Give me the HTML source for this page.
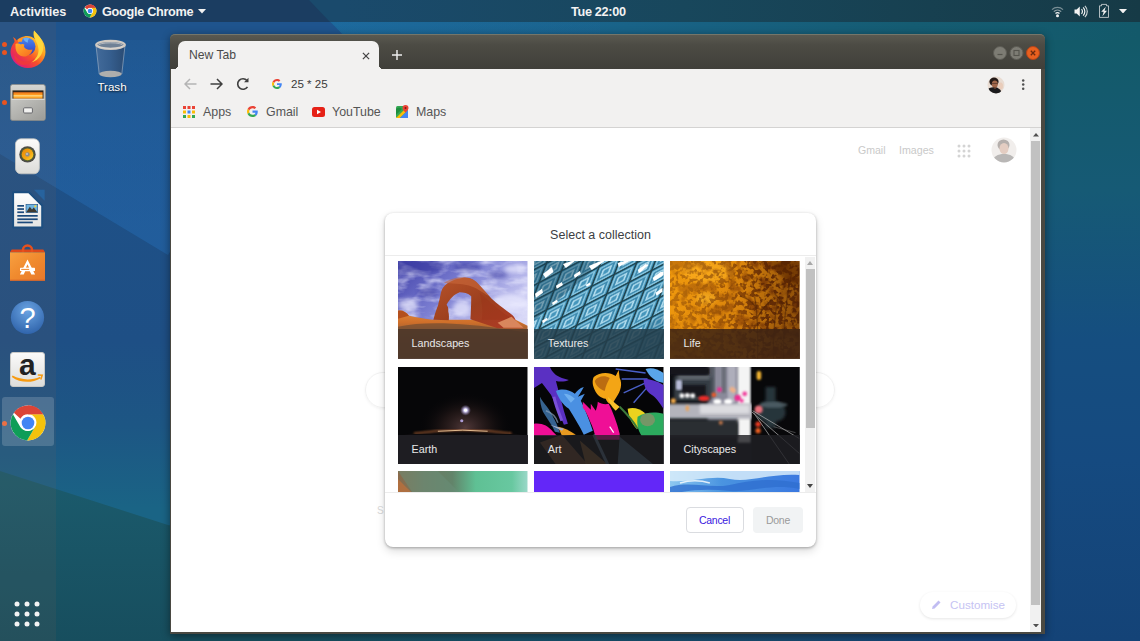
<!DOCTYPE html>
<html><head><meta charset="utf-8"><title>New Tab</title>
<style>
*{box-sizing:border-box;margin:0;padding:0}
html,body{width:1140px;height:641px;overflow:hidden}
body{font-family:"Liberation Sans",sans-serif;position:relative;background:#1e5084}
.abs{position:absolute}
#wall{left:0;top:0;width:1140px;height:641px}
#topbar{left:0;top:0;width:1140px;height:22px;color:#f2f2f2;font-weight:bold;font-size:12.700px;line-height:24px;white-space:nowrap}
#dock{left:0;top:22px;width:56px;height:619px;background:rgba(130,95,85,.12)}
.dot{width:5px;height:5px;border-radius:50%;background:#e95420;left:2px}
#win{left:170px;top:34px;width:874.500px;height:600px;background:#4a4942;border-radius:5px 5px 0 0;box-shadow:0 2px 9px rgba(0,0,0,.45)}
#titlebar{left:0;top:0;width:874.500px;height:35px;background:linear-gradient(#5a5950 0%,#4c4b44 30%,#403f3a 100%);border-radius:5px 5px 0 0;border-top:1px solid #74766a}
#tab{left:8px;top:6px;width:201px;height:29px;background:#f2f1f0;border-radius:7px 7px 0 0;font-size:12.150px;color:#4a4a4a;line-height:29px;padding-left:11px}
#toolbar{left:1px;top:35px;width:870px;height:30px;background:#f2f1f0}
#bmbar{left:1px;top:65px;width:870px;height:29px;background:#f2f1f0;border-bottom:1px solid #d4d3d2;font-size:12.400px;color:#555;line-height:27px}
#content{left:1px;top:94px;width:870px;height:503.500px;background:#fff;overflow:hidden}
#dialog{left:215px;top:179px;width:431px;height:334px;background:#fff;border-radius:8px;box-shadow:0 1px 3px rgba(0,0,0,.3),0 4px 10px rgba(0,0,0,.14)}
.tile{width:129.5px;height:97.5px;overflow:hidden}
.tile .lbl{position:absolute;left:0;bottom:0;width:100%;height:29.5px;background:rgba(32,33,36,.72);color:#e8e8e8;font-size:10.750px;line-height:29px;padding-left:13.5px}
</style></head><body>
<svg width="0" height="0" style="position:absolute"><defs>
<symbol id="chrome" viewBox="0 0 48 48">
 <circle cx="24" cy="24" r="22" fill="#fff"/>
 <path d="M24 2a22 22 0 0 1 19.05 11H24a11 11 0 0 0-9.53 5.5L6.2 11.1A22 22 0 0 1 24 2z" fill="#db4437"/>
 <path d="M43.05 13A22 22 0 0 1 22.9 45.97L32.6 29.5A11 11 0 0 0 33.5 18.5 11 11 0 0 0 24 13z" fill="#f4c20d"/>
 <path d="M4.95 13A22 22 0 0 0 22.9 45.97l9.63-16.47A11 11 0 0 1 14.47 29.5z" fill="#0f9d58"/>
 <path d="M24 2a22 22 0 0 1 19.05 11H24z" fill="#db4437"/>
 <circle cx="24" cy="24" r="10" fill="#fff"/>
 <circle cx="24" cy="24" r="8" fill="#4285f4"/>
</symbol>
<symbol id="gicon" viewBox="0 0 48 48">
 <path fill="#EA4335" d="M24 9.5c3.54 0 6.71 1.22 9.21 3.6l6.85-6.85C35.9 2.38 30.47 0 24 0 14.62 0 6.51 5.38 2.56 13.22l7.98 6.19C12.43 13.72 17.74 9.5 24 9.5z"/>
 <path fill="#4285F4" d="M46.98 24.55c0-1.57-.15-3.09-.38-4.55H24v9.02h12.94c-.58 2.96-2.26 5.48-4.78 7.18l7.73 6c4.51-4.18 7.09-10.36 7.09-17.65z"/>
 <path fill="#FBBC05" d="M10.53 28.59c-.48-1.45-.76-2.99-.76-4.59s.27-3.14.76-4.59l-7.98-6.19C.92 16.46 0 20.12 0 24c0 3.88.92 7.54 2.56 10.78l7.97-6.19z"/>
 <path fill="#34A853" d="M24 48c6.48 0 11.93-2.13 15.89-5.81l-7.73-6c-2.15 1.45-4.92 2.3-8.16 2.3-6.26 0-11.57-4.22-13.47-9.91l-7.98 6.19C6.51 42.62 14.62 48 24 48z"/>
</symbol>
</defs></svg>
<svg id="wall" class="abs" width="1140" height="641" viewBox="0 0 1140 641">
 <defs>
  <linearGradient id="wl" x1="0" y1="0" x2="0" y2="1">
   <stop offset="0" stop-color="#1f5289"/><stop offset=".5" stop-color="#1e4f85"/><stop offset=".64" stop-color="#1d5684"/><stop offset=".78" stop-color="#1a6485"/><stop offset="1" stop-color="#1a6485"/>
  </linearGradient>
  <linearGradient id="wr" x1="0" y1="0" x2="0" y2="1">
   <stop offset="0" stop-color="#135a69"/><stop offset=".25" stop-color="#165a75"/><stop offset=".5" stop-color="#154e80"/><stop offset=".7" stop-color="#154a80"/><stop offset="1" stop-color="#144377"/>
  </linearGradient>
  <linearGradient id="wt" x1="0" y1="0" x2="1" y2="0">
   <stop offset="0" stop-color="#1c6a9c"/><stop offset=".28" stop-color="#1c6a9c"/><stop offset=".55" stop-color="#196388"/><stop offset=".8" stop-color="#155c72"/><stop offset="1" stop-color="#13596a"/>
  </linearGradient>
  <linearGradient id="wb" x1="0" y1="0" x2="0" y2="1">
   <stop offset="0" stop-color="#1b5b6d"/><stop offset="1" stop-color="#174e5e"/>
  </linearGradient>
 </defs>
 <rect width="1140" height="641" fill="url(#wt)"/>
 <rect x="0" y="40" width="600" height="601" fill="url(#wl)"/>
 <rect x="600" y="40" width="540" height="601" fill="url(#wr)"/>
 <linearGradient id="pgd" gradientUnits="userSpaceOnUse" x1="0" y1="22" x2="0" y2="230"><stop offset="0" stop-color="#2468ad" stop-opacity=".12"/><stop offset=".5" stop-color="#2468ad" stop-opacity=".4"/><stop offset="1" stop-color="#2468ad" stop-opacity=".5"/></linearGradient><polygon points="0,0 600,0 600,40 300,40 168,255 0,154" fill="url(#pgd)"/>
 <polygon points="0,471 168,525 600,600 600,641 0,641" fill="url(#wb)"/>
 <linearGradient id="wbs" x1="0" y1="0" x2="1" y2="0"><stop offset="0" stop-color="#174f5f"/><stop offset=".15" stop-color="#174f5f"/><stop offset=".4" stop-color="#165068"/><stop offset=".7" stop-color="#184a70"/><stop offset=".92" stop-color="#15437a"/><stop offset="1" stop-color="#15437a"/></linearGradient>
 <rect x="168" y="626" width="880" height="15" fill="url(#wbs)"/>
 <polygon points="0,0 309,0 348,40 0,40" fill="#1f5289"/>
 <polygon points="0,0 309,0 348,40 300,40 168,255 0,154" fill="#2468ad" opacity=".1"/>
 <linearGradient id="tbg" x1="0" y1="0" x2="1" y2="0"><stop offset="0" stop-color="#1a4a6c"/><stop offset=".3" stop-color="#1a4a6c"/><stop offset=".6" stop-color="#18475c"/><stop offset="1" stop-color="#163a46"/></linearGradient>
 <rect width="1140" height="22" fill="url(#tbg)"/>
 <polygon points="0,0 309,0 330,22 0,22" fill="#1b3d61"/>
</svg>
<div id="dock" class="abs">
 <div class="abs dot" style="top:20px"></div><div class="abs dot" style="top:28px"></div>
 <div class="abs dot" style="top:78px"></div>
 <div class="abs dot" style="top:399px"></div>
 <!-- firefox -->
 <svg class="abs" style="left:10px;top:8px" width="36" height="38" viewBox="0 0 36 38">
  <defs>
   <linearGradient id="ffo" x1=".85" y1=".1" x2=".15" y2=".9"><stop offset="0" stop-color="#ffd33a"/><stop offset=".3" stop-color="#ffa620"/><stop offset=".6" stop-color="#f6502a"/><stop offset=".85" stop-color="#e82a58"/><stop offset="1" stop-color="#d81f8a"/></linearGradient>
   <linearGradient id="ffb" x1="0" y1="0" x2="0" y2="1"><stop offset="0" stop-color="#4a8af0"/><stop offset=".55" stop-color="#3a5ed8"/><stop offset="1" stop-color="#3a3aa0"/></linearGradient>
   <linearGradient id="ffh" x1="0" y1="0" x2="1" y2="1"><stop offset="0" stop-color="#ffb02a"/><stop offset="1" stop-color="#f86a20"/></linearGradient>
  </defs>
  <path d="M3 7c1 2 1.500 3.500 1.500 5C2 15 .5 18.500.5 22a17.500 16 0 0 0 35 0c0-6-2-11-5.500-14.500C28 5 26 3 24 .5c-1 3-.5 6 1 8.500-3-2.500-7-3.500-11-2.500-3 .5-5.500 2-7.500 4C6 9 4.500 8 3 7z" fill="url(#ffo)"/>
  <circle cx="16.500" cy="16.500" r="9" fill="url(#ffb)"/>
  <path d="M13 8.500c2-1 4.500-1 6.500 0-1.500 1-2 2.500-1.500 4-2 0-3.500-1.500-5-4z" fill="#6ab0f8"/>
  <path d="M5.500 14c2-.8 4-.6 5.500.5 1.200-.6 2.500-.5 3.500.2-.8 1.200-.6 2.400.4 3.200 1.600 1.400 4 2.600 7.600 1.600-1 4.500-4.500 7-8.500 7-5 0-8.500-4.500-8.500-9.500z" fill="url(#ffh)"/><path d="M8 9.500c1.500-1 3.500-1.500 5-1l-1.500 3.500c-1.200-.2-2.500-.2-3.500 0z" fill="#ff9a22"/>
  <path d="M24 .5c2.500 3 5 5 7 8.500 3 5 3 11 0 16-2.500 4-6 6.500-10 7.500 5-3 8-8 7.500-13.500-.5-5-3-8-4-11.500-.5-2.500-.5-5-.5-7z" fill="#ffd93d" opacity=".95"/>
  <path d="M4.500 24c2 4 6 7 11 7.500 4 0 7-1 9.500-3.500-2 4-6 7-11.500 7C8 35 3 30.500 4.500 24z" fill="#f03a3a" opacity=".85"/>
 </svg>
 <!-- files -->
 <svg class="abs" style="left:10px;top:62px" width="36" height="37" viewBox="0 0 36 37">
  <defs>
   <linearGradient id="fg" x1="0" y1="0" x2="0" y2="1"><stop offset="0" stop-color="#d6d6d2"/><stop offset="1" stop-color="#a4a4a0"/></linearGradient>
   <linearGradient id="fg2" x1="0" y1="0" x2="1" y2="1"><stop offset="0" stop-color="#c6c6c2"/><stop offset="1" stop-color="#9c9c98"/></linearGradient>
   <linearGradient id="fo" x1="0" y1="0" x2="0" y2="1"><stop offset="0" stop-color="#e8701a"/><stop offset=".35" stop-color="#ff9a20"/><stop offset=".55" stop-color="#ffe090"/><stop offset=".7" stop-color="#ffb030"/><stop offset="1" stop-color="#f08a18"/></linearGradient>
  </defs>
  <rect x=".4" y=".4" width="35" height="36.200" rx="2.500" fill="url(#fg)" stroke="#8a8a86" stroke-width=".8"/>
  <rect x="2.500" y="6.400" width="31" height="8.600" fill="#33261a"/>
  <rect x="3.400" y="8.200" width="29.200" height="6.600" fill="url(#fo)"/>
  <rect x="1.400" y="14.800" width="33.200" height="21" rx="1.200" fill="url(#fg2)"/>
  <rect x="1.400" y="14.800" width="33.200" height="1" fill="#e2e2de"/>
  <rect x="13.600" y="23.800" width="8.800" height="5.200" rx="1" fill="#f2f2f0" stroke="#66666a" stroke-width="1"/>
 </svg>
 <!-- rhythmbox -->
 <svg class="abs" style="left:15px;top:116px" width="25" height="37" viewBox="0 0 25 37">
  <defs><linearGradient id="rg" x1="0" y1="0" x2="0" y2="1"><stop offset="0" stop-color="#fbfbfa"/><stop offset="1" stop-color="#dcdcd8"/></linearGradient>
  <linearGradient id="rc" x1="0" y1="0" x2="1" y2="1"><stop offset="0" stop-color="#e8860a"/><stop offset=".6" stop-color="#f5a812"/><stop offset="1" stop-color="#ffd83a"/></linearGradient></defs>
  <rect x=".4" y=".8" width="24" height="35" rx="5.500" fill="url(#rg)" stroke="#c4c4c0" stroke-width=".8"/>
  <circle cx="12.500" cy="16.400" r="8.200" fill="#4c4c46"/>
  <circle cx="12.500" cy="16.400" r="6.600" fill="#5a6a2a"/>
  <circle cx="12.500" cy="16.400" r="5.800" fill="url(#rc)"/>
  <circle cx="12.500" cy="16.400" r="2.200" fill="#8c8c8c"/>
  <circle cx="12" cy="15.900" r="1" fill="#c4c4c4"/>
 </svg>
 <!-- writer -->
 <svg class="abs" style="left:11px;top:166.500px" width="34" height="40" viewBox="0 0 34 40">
  <defs><linearGradient id="wg" x1="0" y1="0" x2="0" y2="1"><stop offset="0" stop-color="#ffffff"/><stop offset="1" stop-color="#e4e4e2"/></linearGradient></defs>
  <path d="M23 .8h10.600v11z" fill="#27639e"/>
  <path d="M2.100 3.200h15.800l13.300 13.300v22H2.100z" fill="url(#wg)" stroke="#1d4f80" stroke-width="2" stroke-linejoin="round"/>
  <g fill="#1b4a7c">
   <rect x="6.300" y="16" width="6.700" height="1.700"/><rect x="6.300" y="19.200" width="6.700" height="1.700"/><rect x="6.300" y="22.400" width="6.700" height="1.700"/>
   <rect x="6.300" y="26" width="20.400" height="1.700"/><rect x="6.300" y="29.400" width="20.400" height="1.700"/><rect x="6.300" y="32.600" width="15.500" height="1.700"/>
  </g>
  <rect x="15" y="15.300" width="11.700" height="8.300" fill="#6fb4e0" stroke="#1b4a7c" stroke-width=".6"/>
  <path d="M15.300 23.300l3.500-5.500 2.200 2.600 1.800-1.800 3.600 4.700z" fill="#3f3a30"/>
  <circle cx="24.300" cy="17.300" r="1.100" fill="#f5d93a"/>
 </svg>
 <!-- software -->
 <svg class="abs" style="left:9px;top:222px" width="37" height="38" viewBox="0 0 37 38">
  <defs><linearGradient id="sg" x1="0" y1="0" x2="1" y2="1"><stop offset="0" stop-color="#f8a040"/><stop offset=".5" stop-color="#f08a2e"/><stop offset="1" stop-color="#e8782a"/></linearGradient></defs>
  <path d="M2.700 5.500h31.600l1.700 2.800H1z" fill="#de481a"/>
  <path d="M14 8.300V6a4.500 4.500 0 0 1 9 0v2.300" fill="none" stroke="#e8501c" stroke-width="2.500"/>
  <rect x="1" y="8.300" width="35" height="28.400" fill="url(#sg)"/>
  <rect x="1" y="35.700" width="35" height="1" fill="#d8642a"/>
  <path d="M18.500 15.600l7.600 14.800h-3.800l-1.500-3.200h-4.600l-1.500 3.200h-3.800zM16.900 23.800h3.200l-1.600-3.600z" fill="#fff"/>
  <rect x="11" y="23.800" width="15" height="3.200" rx=".6" fill="#fff"/>
  <rect x="12.200" y="24.900" width="8" height="1" fill="#f08a2e"/>
 </svg>
 <!-- help -->
 <svg class="abs" style="left:10px;top:278px" width="35" height="35" viewBox="0 0 35 35">
  <defs><radialGradient id="hg" cx=".5" cy=".3" r=".75"><stop offset="0" stop-color="#6aa4e2"/><stop offset="1" stop-color="#2c60a8"/></radialGradient></defs>
  <circle cx="17.500" cy="17.500" r="16.600" fill="url(#hg)"/>
  <text x="17.500" y="28" text-anchor="middle" font-family="Liberation Sans, sans-serif" font-size="29" fill="#fff">?</text>
 </svg>
 <!-- amazon -->
 <svg class="abs" style="left:10px;top:330px" width="35" height="35" viewBox="0 0 35 35">
  <defs><linearGradient id="ag" x1="0" y1="0" x2="0" y2="1"><stop offset="0" stop-color="#fbfbfa"/><stop offset="1" stop-color="#dcdcda"/></linearGradient></defs>
  <rect x=".5" y=".5" width="34" height="34" rx="2.500" fill="url(#ag)" stroke="#c9c9c6"/>
  <text x="17.300" y="23.300" text-anchor="middle" font-family="Liberation Sans, sans-serif" font-weight="bold" font-size="30" fill="#222">a</text>
  <path d="M2.600 23.600c8.500 4.600 19 5 27.500 1.200l.6 1.400c-9 5.200-20.500 4.800-28.900-1.300z" fill="#f79a10"/>
  <path d="M27.800 23l4.400.2-1.400 4.200" fill="none" stroke="#f79a10" stroke-width="1.500"/>
 </svg>
 <!-- chrome -->
 <div class="abs" style="left:2px;top:375px;width:52px;height:49px;background:rgba(255,255,255,.17);border-radius:3px"></div>
 <svg class="abs" style="left:9px;top:382px" width="38" height="38"><use href="#chrome"/></svg>
 <!-- apps grid -->
 <svg class="abs" style="left:13px;top:578px" width="28" height="28" viewBox="0 0 28 28" fill="#f4f4f4">
  <circle cx="4" cy="4" r="2.500"/><circle cx="14" cy="4" r="2.500"/><circle cx="24" cy="4" r="2.500"/>
  <circle cx="4" cy="14" r="2.500"/><circle cx="14" cy="14" r="2.500"/><circle cx="24" cy="14" r="2.500"/>
  <circle cx="4" cy="24" r="2.500"/><circle cx="14" cy="24" r="2.500"/><circle cx="24" cy="24" r="2.500"/>
 </svg>
</div>
<!-- trash -->
<svg class="abs" style="left:94px;top:39px" width="34" height="40" viewBox="0 0 34 40">
 <defs><linearGradient id="trg" x1="0" y1="0" x2="1" y2="0"><stop offset="0" stop-color="#4a6f9c"/><stop offset=".5" stop-color="#3a5f8c"/><stop offset="1" stop-color="#2c486c"/></linearGradient></defs>
 <path d="M2 6.500l3.200 28.500c2.500 3.800 20.100 3.800 22.600 0L31 6.500z" fill="url(#trg)" opacity=".82"/>
 <path d="M2 6.500l3.200 28.500M27.800 35L31 6.500" fill="none" stroke="#9fb0c4" stroke-width=".8" opacity=".8"/>
 <ellipse cx="16.500" cy="35" rx="11.300" ry="3.300" fill="#b9b5b0" opacity=".92"/>
 <ellipse cx="16.500" cy="5.800" rx="14.300" ry="4" fill="#6f8196" stroke="#cfc9c2" stroke-width="2.200"/>
 <ellipse cx="16.500" cy="6.600" rx="12.500" ry="2.800" fill="none" stroke="#e8e4e0" stroke-width=".8" opacity=".7"/>
</svg>
<div class="abs" style="left:82px;top:79px;width:60px;text-align:center;color:#fff;font-size:11.600px;line-height:16px;text-shadow:0 1px 2px rgba(0,0,0,.8)">Trash</div>
<div id="topbar" class="abs">
 <span class="abs" style="left:10px">Activities</span>
 <svg class="abs" style="left:83px;top:4px" width="14" height="14"><use href="#chrome"/></svg>
 <span class="abs" style="left:102px;letter-spacing:-.3px">Google Chrome</span>
 <svg class="abs" style="left:198px;top:9px" width="8" height="4.500" viewBox="0 0 9 5"><path d="M0 0h9L4.5 5z" fill="#f2f2f2"/></svg>
 <span class="abs" style="left:571px;letter-spacing:-.32px">Tue 22:00</span>
 <svg class="abs" style="left:1051px;top:5px" width="13" height="13" viewBox="0 0 13 13" fill="none" stroke="#f2f2f2">
  <path d="M1 4.600a8 8 0 0 1 11 0" stroke-width="1.200" opacity=".45"/>
  <path d="M2.800 6.600a5.400 5.400 0 0 1 7.400 0" stroke-width="1.200" opacity=".55"/>
  <path d="M4.500 8.500a3 3 0 0 1 4 0" stroke-width="1.400"/>
  <circle cx="6.500" cy="10.800" r="1.500" fill="#f2f2f2" stroke="none"/>
 </svg>
 <svg class="abs" style="left:1073.500px;top:4.500px" width="14" height="13" viewBox="0 0 15 14" fill="none" stroke="#f2f2f2">
  <path d="M0.5 4.8h2.3L6.2 1.6v10.8L2.8 9.2H0.5z" fill="#f2f2f2" stroke="none"/>
  <path d="M8 4.5a3.5 3.5 0 0 1 0 5" stroke-width="1.3"/>
  <path d="M9.8 2.6a6.2 6.2 0 0 1 0 8.8" stroke-width="1.3"/>
  <path d="M11.7 0.9a8.6 8.6 0 0 1 0 12.2" stroke-width="1.2" opacity=".85"/>
 </svg>
 <svg class="abs" style="left:1098px;top:3px" width="12" height="16" viewBox="0 0 12 16" fill="none" stroke="#f2f2f2">
  <path d="M1.500 2.800h2V1.400h5v1.400h2v11.600h-9z" stroke-width="1" opacity=".7"/>
  <path d="M7.800 3.800L3.200 8.800h2.500L4.400 13.200l4.600-5.400H6.500z" fill="#f2f2f2" stroke="none"/>
 </svg>
 <svg class="abs" style="left:1119px;top:8.500px" width="8" height="4.500" viewBox="0 0 9 5"><path d="M0 0h9L4.5 5z" fill="#f2f2f2"/></svg>
</div>
<div id="win" class="abs">
 <div id="titlebar" class="abs">
  <div class="abs" style="left:2px;top:28px;width:7px;height:7px;background:radial-gradient(circle at 0 0,transparent 6.500px,#f2f1f0 7px)"></div>
  <div class="abs" style="left:208px;top:28px;width:7px;height:7px;background:radial-gradient(circle at 100% 0,transparent 6.500px,#f2f1f0 7px)"></div>
  <div id="tab" class="abs">New Tab</div>
  <svg class="abs" style="left:191.500px;top:16.500px" width="8" height="8" viewBox="0 0 9 9"><path d="M1 1l7 7M8 1l-7 7" stroke="#444" stroke-width="1.400"/></svg>
  <svg class="abs" style="left:221.500px;top:14.500px" width="10" height="10" viewBox="0 0 11 11"><path d="M5.500 0v11M0 5.500h11" stroke="#eee" stroke-width="1.600"/></svg>
  <!-- window buttons -->
  <svg class="abs" style="left:822px;top:10px" width="50" height="16" viewBox="0 0 50 16">
   <circle cx="8" cy="8" r="6.500" fill="#7d7c74" stroke="#5d5c55"/>
   <circle cx="24.500" cy="8" r="6.500" fill="#7d7c74" stroke="#5d5c55"/>
   <circle cx="41" cy="8" r="6.500" fill="#e8601f" stroke="#b3441a"/>
   <path d="M5.500 9.500h5" stroke="#55544d" stroke-width="1.200"/>
   <rect x="22" y="5.500" width="5" height="5" fill="none" stroke="#55544d" stroke-width="1.100"/>
   <path d="M38.800 5.800l4.400 4.400M43.200 5.800l-4.400 4.400" stroke="#6b2a10" stroke-width="1.300"/>
  </svg>
 </div>
 <div id="toolbar" class="abs">
  <svg class="abs" style="left:13px;top:9px" width="13" height="12" viewBox="0 0 13 12" fill="none" stroke="#b4b4b4" stroke-width="1.500"><path d="M12.500 6H1.500M6 1L1 6l5 5"/></svg>
  <svg class="abs" style="left:39px;top:9px" width="13" height="12" viewBox="0 0 13 12" fill="none" stroke="#3f3f3f" stroke-width="1.500"><path d="M.5 6h11M7 1l5 5-5 5"/></svg>
  <svg class="abs" style="left:65px;top:8px" width="14" height="14" viewBox="0 0 14 14" fill="none" stroke="#3f3f3f" stroke-width="1.600"><path d="M11.500 9.800A5.300 5.300 0 1 1 11 3.500"/><path d="M12.500 .8v4.500H8z" fill="#3f3f3f" stroke="none"/></svg>
  <svg class="abs" style="left:101px;top:10px" width="10" height="10"><use href="#gicon"/></svg>
  <span class="abs" style="left:120px;top:7px;font-size:11.600px;line-height:16px;color:#3a3a3a">25 * 25</span>
  <svg class="abs" style="left:816px;top:7px" width="18" height="18" viewBox="0 0 18 18">
   <defs><clipPath id="avc"><circle cx="9" cy="9" r="8.500"/></clipPath></defs>
   <circle cx="9" cy="9" r="8.500" fill="#e9dcd2"/>
   <g clip-path="url(#avc)">
    <ellipse cx="7" cy="5.800" rx="4.600" ry="4.200" fill="#241a17"/>
    <ellipse cx="7.800" cy="8.300" rx="3" ry="3.700" fill="#a0664a"/>
    <path d="M5 7.600h5.500" stroke="#1a1412" stroke-width=".6" opacity=".7"/>
    <path d="M-1 18c.5-5 3-6.800 7.500-6.800s6.500 1.200 7.500 3.800l-1 3z" fill="#1b1a1c"/>
    <path d="M6.500 10.800c.8.800 2 .8 2.800 0l-.4 1.800h-2z" fill="#8a5238"/>
    <ellipse cx="13.500" cy="10" rx="2.500" ry="3.500" fill="#e8c8b4" opacity=".8"/>
   </g>
  </svg>
  <svg class="abs" style="left:850px;top:9px" width="4" height="14" viewBox="0 0 4 14" fill="#505050"><circle cx="2.200" cy="2.400" r="1.250"/><circle cx="2.200" cy="6.600" r="1.250"/><circle cx="2.200" cy="10.800" r="1.250"/></svg>
 </div>
 <div id="bmbar" class="abs">
  <svg class="abs" style="left:12px;top:7px" width="12" height="12" viewBox="0 0 12 12">
   <rect x="0" y="0" width="3" height="3" fill="#ea4335"/><rect x="4.500" y="0" width="3" height="3" fill="#ea4335"/><rect x="9" y="0" width="3" height="3" fill="#ea4335"/>
   <rect x="0" y="4.500" width="3" height="3" fill="#fbbc05"/><rect x="4.500" y="4.500" width="3" height="3" fill="#4285f4"/><rect x="9" y="4.500" width="3" height="3" fill="#fbbc05"/>
   <rect x="0" y="9" width="3" height="3" fill="#34a853"/><rect x="4.500" y="9" width="3" height="3" fill="#fbbc05"/><rect x="9" y="9" width="3" height="3" fill="#34a853"/>
  </svg>
  <span class="abs" style="left:32px;top:0">Apps</span>
  <svg class="abs" style="left:76px;top:7px" width="11" height="11"><use href="#gicon"/></svg>
  <span class="abs" style="left:95px;top:0">Gmail</span>
  <svg class="abs" style="left:141px;top:8px" width="13" height="10" viewBox="0 0 13 10"><rect width="13" height="10" rx="2.500" fill="#e62117"/><path d="M5 2.800v4.400L9 5z" fill="#fff"/></svg>
  <span class="abs" style="left:161px;top:0">YouTube</span>
  <svg class="abs" style="left:225px;top:6px" width="13" height="13" viewBox="0 0 13 13">
   <rect x="0" y="1" width="12" height="12" rx="1.500" fill="#34a853"/>
   <path d="M0 13L12 1v4L4 13z" fill="#fbbc05"/>
   <path d="M4 13l8-8v8z" fill="#4285f4"/>
   <path d="M0 4c2-2 4-2 6 0l-6 6z" fill="#1e8e3e"/>
   <path d="M9.500 0a3 3 0 0 1 3 3c0 2-3 4.500-3 4.500S6.500 5 6.500 3a3 3 0 0 1 3-3z" fill="#ea4335"/>
   <circle cx="9.500" cy="3" r="1" fill="#7a1a12"/>
  </svg>
  <span class="abs" style="left:245px;top:0">Maps</span>
 </div>
 <div id="content" class="abs">
  <span class="abs" style="left:687px;top:15px;font-size:10.550px;color:#c9c9c9;line-height:14px">Gmail</span>
  <span class="abs" style="left:728px;top:15px;font-size:10.650px;color:#c9c9c9;line-height:14px">Images</span>
  <svg class="abs" style="left:786px;top:16px" width="14" height="14" viewBox="0 0 14 14" fill="#d4d4d4">
   <circle cx="2" cy="2" r="1.500"/><circle cx="7" cy="2" r="1.500"/><circle cx="12" cy="2" r="1.500"/>
   <circle cx="2" cy="7" r="1.500"/><circle cx="7" cy="7" r="1.500"/><circle cx="12" cy="7" r="1.500"/>
   <circle cx="2" cy="12" r="1.500"/><circle cx="7" cy="12" r="1.500"/><circle cx="12" cy="12" r="1.500"/>
  </svg>
  <svg class="abs" style="left:820px;top:9px" width="26" height="26" viewBox="0 0 26 26">
   <defs><clipPath id="avc2"><circle cx="13" cy="13" r="12.500"/></clipPath></defs>
   <circle cx="13" cy="13" r="12.500" fill="#f1eeec"/>
   <g clip-path="url(#avc2)" opacity=".32">
    <ellipse cx="12.500" cy="8" rx="6" ry="5.500" fill="#3a2d28"/>
    <ellipse cx="13" cy="11.500" rx="4.500" ry="5.500" fill="#c98a6a"/>
    <path d="M1 26c1-7 6-9 12-9s11 2 12 9z" fill="#444"/>
   </g>
  </svg>
  <!-- search box hints -->
  <div class="abs" style="left:194px;top:244px;width:470px;height:36px;border-radius:18px;border:1px solid #f1f1f1;box-shadow:0 1px 3px rgba(0,0,0,.05)"></div>
  <span class="abs" style="left:206px;top:377px;font-size:10px;color:#d8d8d8">S</span>
  <!-- customise -->
  <div class="abs" style="left:749px;top:464px;width:96px;height:26px;border-radius:13px;background:#fff;box-shadow:0 1px 3px rgba(0,0,0,.10);color:#c6c3f3;font-size:11.650px;line-height:26px;padding-left:30px">Customise</div>
  <svg class="abs" style="left:760px;top:471px" width="11" height="11" viewBox="0 0 11 11"><path d="M1 10l.6-2.600L7.500 1.500l2 2L3.600 9.400z" fill="#c1bdf2"/></svg>
  <!-- page scrollbar -->
  <div class="abs" style="left:859px;top:0;width:11px;height:504px;background:#f1f1f1"></div>
  <div class="abs" style="left:860px;top:12.500px;width:9px;height:464px;background:#c1c1c1"></div>
  <svg class="abs" style="left:861.500px;top:5px" width="6" height="3.500" viewBox="0 0 7 4"><path d="M0 4h7L3.500 0z" fill="#505050"/></svg>
  <svg class="abs" style="left:861.500px;top:495.500px" width="6" height="3.500" viewBox="0 0 7 4"><path d="M0 0h7L3.500 4z" fill="#505050"/></svg>
 </div>
 <div id="dialog" class="abs">
  <div class="abs" style="left:0;top:0;width:431px;height:43px;text-align:center;font-size:12.500px;line-height:44px;color:#3c4043;border-bottom:1px solid #ececec">Select a collection</div>
  <div class="abs" id="scroll" style="left:0;top:44px;width:431px;height:236.200px;overflow:hidden;border-bottom:1px solid #ececec">
   <!-- Landscapes -->
   <div class="abs tile" style="left:13px;top:4.200px">
    <svg class="abs" width="130" height="98" viewBox="0 0 130 98" preserveAspectRatio="none" style="left:0;top:0;width:129.500px;height:97.500px">
     <defs>
      <linearGradient id="t1s" x1="0" y1="0" x2="1" y2=".8"><stop offset="0" stop-color="#3f3fa8"/><stop offset=".4" stop-color="#7c7fd2"/><stop offset=".75" stop-color="#c4c4f0"/><stop offset="1" stop-color="#e6e6fa"/></linearGradient>
      <linearGradient id="t1g" x1="0" y1="0" x2="0" y2="1"><stop offset="0" stop-color="#e2893a"/><stop offset=".25" stop-color="#cf6f2a"/><stop offset=".5" stop-color="#8a5a3a"/><stop offset="1" stop-color="#6a4a34"/></linearGradient>
      <linearGradient id="t1a" x1="0" y1="0" x2="1" y2="1"><stop offset="0" stop-color="#b8542a"/><stop offset=".5" stop-color="#9c3f1e"/><stop offset="1" stop-color="#b23a26"/></linearGradient>
      <filter id="blur2"><feGaussianBlur stdDeviation="2.200"/></filter>
      <filter id="blur1"><feGaussianBlur stdDeviation="1"/></filter>
      <filter id="t1n" color-interpolation-filters="sRGB" x="0" y="0" width="100%" height="100%"><feTurbulence type="fractalNoise" baseFrequency=".05 .12" numOctaves="3" seed="3"/><feColorMatrix values="0 0 0 0 .92  0 0 0 0 .92  0 0 0 0 1  2.400 0 0 0 -1.050"/></filter>
     </defs>
     <rect width="130" height="98" fill="url(#t1s)"/>
     <rect width="130" height="70" filter="url(#t1n)" opacity=".75"/>
     <g filter="url(#blur2)" fill="#34349c" opacity=".55"><ellipse cx="20" cy="6" rx="26" ry="7"/><ellipse cx="70" cy="6" rx="14" ry="4"/><ellipse cx="30" cy="32" rx="10" ry="4"/><ellipse cx="100" cy="14" rx="10" ry="3"/></g>
     <g filter="url(#blur2)" fill="#ececff" opacity=".7"><ellipse cx="112" cy="42" rx="18" ry="9"/><ellipse cx="10" cy="44" rx="10" ry="6"/><ellipse cx="64" cy="48" rx="9" ry="8"/><ellipse cx="118" cy="8" rx="12" ry="4"/></g>
     <path d="M0 50c4-1 8 1 11 5 8 2 16 3 24 4l37 0 46 0 12 6v33H0z" fill="url(#t1g)"/>
     <path d="M35.500 59c1-4 2-7 3-10 1-3 2-4 2-6 2-6 2-10 3.500-14 3-7 12-11 23-12.500 6 0 11 3 15 8 6 6 10 12 16 17 6 5 12 9 17 13 2 2 3 4 3 5.500l8 7.500H100l-27.300-9c.5-7 .8-15 .8-23-3-3-8-4-11.500-4-6 2-10 7-13.200 12.400 1.500 2 2 4 1.600 6.600 1 3 .8 6 .600 9z" fill="url(#t1a)"/>
     <path d="M46 22c6-4 14-6 21-5.500 6 0 11 3 15 8 4 4 7 8 10 11-8-4-13-9-21-11-9-2-17-2-25-2.500z" fill="#c8683a" opacity=".6"/>
     <path d="M82 32c8 7 16 15 26 22l10 5H84c2-9 0-18-2-27z" fill="#9c3418" opacity=".45"/>
     <path d="M100 62l14-6 12 11h-20z" fill="#e8a070" opacity=".75"/>
     <path d="M0 50c4-1 8 1 11 5l-11 3z" fill="#b4501d"/>
     <path d="M0 66c30-6 70-4 130 6v26H0z" fill="#6a4a32" opacity=".65"/>
</svg>
    <div class="lbl" style="background:rgba(72,52,40,.8)">Landscapes</div>
   </div>
   <!-- Textures -->
   <div class="abs tile" style="left:149.300px;top:4.200px">
    <svg class="abs" width="130" height="98" viewBox="0 0 130 98" preserveAspectRatio="none" style="left:0;top:0;width:129.500px;height:97.500px">
     <defs>
      <linearGradient id="t2b" x1="0" y1="0" x2="1" y2="1"><stop offset="0" stop-color="#4a9cc0"/><stop offset=".5" stop-color="#6cbbd8"/><stop offset="1" stop-color="#4a9cc0"/></linearGradient>
      <pattern id="t2p" width="1" height="1" patternUnits="userSpaceOnUse" patternTransform="matrix(22.600 -11.850 7.500 -19.600 4 70)">
       <rect width="1" height="1" fill="#2f7fa4"/>
       <rect x=".1" y=".1" width=".84" height=".84" fill="#86c4de"/>
       <rect x=".2" y=".2" width=".64" height=".64" fill="#3a88ae"/>
       <rect x=".3" y=".3" width=".44" height=".44" fill="#aedaec"/>
       <rect x=".4" y=".4" width=".24" height=".24" fill="#4696bc"/>
       <rect x="0" y="0" width="1" height=".085" fill="#23434c"/>
       <rect x="0" y="0" width=".075" height="1" fill="#23434c"/>
      </pattern>
     </defs>
     <rect width="130" height="98" fill="url(#t2b)"/>
     <rect width="130" height="98" fill="url(#t2p)"/>
     <path d="M0 0h70L0 60z" fill="#163f52" opacity=".4"/>
     <path d="M130 98V50L80 98z" fill="#1f5a78" opacity=".3"/>
     <g fill="#fff"><path d="M9 13l9-7 1.500 5-8 6z"/><path d="M29 3l9-3h3l-9 7z"/><path d="M55 5l12-5h4l-13 9z"/><path d="M1 33l7-5 1 4-7 5z"/><path d="M22 25l6-4 1 3-6 4z"/><path d="M84 2l7-2h5l-11 6z"/><path d="M104 9l8-6 3 1-9 8z"/><path d="M119 17l8-6 3 0v3l-9 6z"/><path d="M40 14l6-4 1 3-6 4z"/><path d="M122 32l7-5v4l-6 4z"/><path d="M18 42l5-3 1 2-5 3.500z"/><path d="M8 60l5-3 1 2-5 3.500z"/><path d="M52 24l4-2.500 1 2-4 2.500z"/></g>
</svg>
    <div class="lbl" style="background:rgba(36,62,74,.86)">Textures</div>
   </div>
   <!-- Life -->
   <div class="abs tile" style="left:285px;top:4.200px">
    <svg class="abs" width="130" height="98" viewBox="0 0 130 98" preserveAspectRatio="none" style="left:0;top:0;width:129.500px;height:97.500px">
     <defs>
      <linearGradient id="t3b" x1="0" y1="0" x2="1" y2=".3"><stop offset="0" stop-color="#f09a0e"/><stop offset=".45" stop-color="#e88f0c"/><stop offset="1" stop-color="#c9760c"/></linearGradient>
      <filter id="t3n" color-interpolation-filters="sRGB" x="0" y="0" width="100%" height="100%"><feTurbulence type="fractalNoise" baseFrequency=".22" numOctaves="2" seed="11"/><feColorMatrix values="0 0 0 0 .40  0 0 0 0 .17  0 0 0 0 .02  7 0 0 0 -3.300"/></filter>
      <filter id="t3m" color-interpolation-filters="sRGB" x="0" y="0" width="100%" height="100%"><feTurbulence type="fractalNoise" baseFrequency=".09" numOctaves="2" seed="5"/><feColorMatrix values="0 0 0 0 .50  0 0 0 0 .22  0 0 0 0 .02  5 0 0 0 -2.400"/></filter>
      <linearGradient id="t3kg" x1="0" y1="0" x2="1" y2="0"><stop offset="0" stop-color="#fff" stop-opacity=".4"/><stop offset=".45" stop-color="#fff" stop-opacity=".58"/><stop offset=".75" stop-color="#fff" stop-opacity="1"/></linearGradient><mask id="t3k" maskUnits="userSpaceOnUse" x="0" y="0" width="130" height="98"><rect width="130" height="98" fill="url(#t3kg)"/></mask><linearGradient id="t3d" x1="0" y1="0" x2="1" y2="0"><stop offset="0" stop-color="#000" stop-opacity="0"/><stop offset=".55" stop-color="#3a1804" stop-opacity=".05"/><stop offset="1" stop-color="#3a1804" stop-opacity=".42"/></linearGradient>
     </defs>
     <rect width="130" height="98" fill="url(#t3b)"/>
     <ellipse cx="38" cy="10" rx="26" ry="12" fill="#ffae1a" opacity=".8" filter="url(#blur2)"/>
     <ellipse cx="36" cy="38" rx="10" ry="6" fill="#ffc030" opacity=".5" filter="url(#blur2)"/>
     <g mask="url(#t3k)"><rect width="130" height="98" filter="url(#t3m)" opacity=".8"/>
     <rect width="130" height="98" filter="url(#t3n)" opacity=".9"/></g>
     <rect width="130" height="98" fill="url(#t3d)"/>
     <g stroke="#4a2006" stroke-width="1.300" opacity=".5" fill="none"><path d="M88 98c0-24 1-40-3-62M87 58c5-9 9-14 16-20M86 46c-5-7-10-9-16-11"/><path d="M104 98c-1-20 1-40 4-60"/><path d="M114 98c-1-30 2-56 8-86M117 50c-5-8-7-13-12-17"/></g>
     <path d="M100 0h30v26c-10-2-20-10-30-26z" fill="#5a2806" opacity=".5" filter="url(#blur1)"/>
</svg>
    <div class="lbl" style="background:rgba(62,36,20,.86)">Life</div>
   </div>
   <!-- Earth -->
   <div class="abs tile" style="left:13px;top:109.500px">
    <svg class="abs" width="130" height="98" viewBox="0 0 130 98" preserveAspectRatio="none" style="left:0;top:0;width:129.500px;height:97.500px">
     <defs>
      <radialGradient id="t4g" cx=".52" cy=".62" r=".36"><stop offset="0" stop-color="#6a4a4a" stop-opacity=".75"/><stop offset=".5" stop-color="#3a2624" stop-opacity=".45"/><stop offset="1" stop-color="#060608" stop-opacity="0"/></radialGradient>
      <radialGradient id="t4s" cx=".5" cy=".5" r=".5"><stop offset="0" stop-color="#fff"/><stop offset=".35" stop-color="#d8d0ff" stop-opacity=".9"/><stop offset="1" stop-color="#8a7ab0" stop-opacity="0"/></radialGradient>
     </defs>
     <rect width="130" height="98" fill="#060608"/>
     <rect width="130" height="98" fill="url(#t4g)"/>
     <path d="M0 69Q65 58 130 69V98H0z" fill="#0d0b0d"/>
     <path d="M16 66.700Q65 60.200 114 66.700" fill="none" stroke="#c8703a" stroke-width="1.400" opacity=".95" filter="url(#blur1)"/>
     <path d="M40 64.600Q65 62.400 90 64.600" fill="none" stroke="#ffd9a8" stroke-width=".9" opacity=".9"/>
     <circle cx="67.800" cy="43.500" r="5.500" fill="url(#t4s)"/><circle cx="67.800" cy="43.500" r="1.500" fill="#fff"/>
     <circle cx="64" cy="54" r="1.600" fill="#b9a8e8" opacity=".9"/>
    </svg>
    <div class="lbl" style="background:rgba(34,33,38,.86)">Earth</div>
   </div>
   <!-- Art -->
   <div class="abs tile" style="left:149.300px;top:109.500px">
    <svg class="abs" width="130" height="98" viewBox="0 0 130 98" preserveAspectRatio="none" style="left:0;top:0;width:129.500px;height:97.500px">
     <rect width="130" height="98" fill="#050507"/>
     <path d="M0 0h16c2 5 6 9 12 11l7 2c-4 2-9 2-13 1 2 8 5 18 8 30l4 13-4 1c-4-10-8-20-13-30L8 16 0 21z" fill="#5a30c2"/>
     <path d="M20 30c1 6 4 14 8 24" stroke="#7a50d8" stroke-width="3" fill="none"/>
     <path d="M22 24c7-3 14-1 19 3 2-3 5-6 9-7-2 4-4 7-6 10l7-3-4 7c4 8 8 18 12 30l-9 4C46 60 40 50 35 42c-6-4-10-10-13-18z" fill="#4a90e2"/>
     <path d="M30 27c4 0 8 2 11 5l-4 4c-2-3-5-6-7-9z" fill="#6fb0f0"/>
     <path d="M6 30c3 6 8 10 12 18 4 7 6 12 8 18l-5-1c-3-7-8-13-12-20-2-5-3-10-3-15z" fill="#3f74a8" opacity=".85"/>
     <path d="M12 44c6 2 10 6 12 12" stroke="#88a0b8" stroke-width="1.500" fill="none" opacity=".7"/>
     <path d="M49 35l8 8 0-6 5 7c1-3 2-6 2-9 3 2 7 3 11 2 4 8 8 18 11 30v6H62c-1-7-3-13-6-19-2-5-4-10-7-13z" fill="#ef0f96"/>
     <path d="M0 57c8-1 14 2 19 8l4 4H0z" fill="#ef0f96"/>
     <path d="M60 10c6-5 16-5 22-1l3-6 1 8c3 6 1 13-3 19l-5 8c-3-1-5-3-6-6-5-1-9-4-11-9-2-4-3-9-1-13z" fill="#f3a515"/>
     <path d="M61 14c3-5 10-6 15-3-2 4-4 8-5 13-5-2-9-5-10-10z" fill="#a85a10" opacity=".75"/>
     <path d="M74 30c3 3 7 6 12 10l-4 4c-4-4-7-8-8-14z" fill="#f7c02a"/>
     <path d="M112 2c6-2 12 0 18 4v10c-8-1-14-6-18-14z" fill="#5aa6ea"/>
     <path d="M82 2l30 4M88 12l26 0M90 26l22-10M100 36l14-16" stroke="#4a60c8" stroke-width="1.400" fill="none"/>
     <path d="M110 12c6 0 14 2 20 6v24c-4-6-8-12-12-14-6-4-8-10-8-16z" fill="#5a34c8"/>
     <path d="M94 42c6-2 12 0 17 4 2 5 1 10-2 14l-6 2c-5-5-8-12-9-20z" fill="#ead21e"/>
     <path d="M104 50c8-5 18-5 26-3v22h-22c-4-6-5-12-4-19z" fill="#2cab5e"/>
     <ellipse cx="114" cy="53" rx="7.500" ry="6.500" fill="#7d9468" opacity=".9"/>
     <path d="M86 40c6 6 12 12 18 22" stroke="#3c7a3c" stroke-width="2" fill="none"/>
     <path d="M24 60c6 1 12 4 18 8l-14 1z" fill="#e89a20"/>
     <path d="M16 58l14 4-2 2z" fill="#a8b0c8"/>
     <path d="M28 68l26 30H22L6 76z" fill="#6a4424" opacity=".9"/>
     <path d="M46 74l28 24H52z" fill="#8a5c28" opacity=".8"/>
     <path d="M86 70l34 28H84z" fill="#4a6a80" opacity=".8"/>
     <path d="M60 68l14 30" stroke="#5a7890" stroke-width="3" opacity=".8"/>
     <path d="M76 60l4 6" stroke="#fff" stroke-width="1.200"/>
</svg>
    <div class="lbl" style="background:rgba(32,32,36,.74)">Art</div>
   </div>
   <!-- Cityscapes -->
   <div class="abs tile" style="left:285px;top:109.500px">
    <svg class="abs" width="130" height="98" viewBox="0 0 130 98" preserveAspectRatio="none" style="left:0;top:0;width:129.500px;height:97.500px">
     <defs>
      <filter id="blur3"><feGaussianBlur stdDeviation="1.600"/></filter>
      <filter id="blur4"><feGaussianBlur stdDeviation="3"/></filter>
     </defs>
     <rect width="130" height="98" fill="#0c0e12"/>
     <rect x="38" y="-4" width="32" height="60" fill="#8a8a9a" filter="url(#blur3)"/><rect x="40" y="-4" width="5" height="34" fill="#4a5058" opacity=".8" filter="url(#blur1)"/><rect x="52" y="-4" width="4" height="30" fill="#5a6068" opacity=".7" filter="url(#blur1)"/><rect x="58" y="-4" width="8" height="40" fill="#b8b8c4" opacity=".8" filter="url(#blur1)"/>
     <rect x="4" y="8" width="38" height="26" rx="4" fill="#363c44" filter="url(#blur3)"/><rect x="8" y="8" width="32" height="5" fill="#6a7078" opacity=".8" filter="url(#blur3)"/>
     <rect x="12" y="18" width="24" height="12" fill="#14161a" filter="url(#blur1)"/>
     <rect x="0" y="0" width="40" height="8" fill="#14181c" filter="url(#blur1)"/>
     <rect x="6" y="13" width="6" height="10" rx="1.500" fill="#b8bcd8" filter="url(#blur1)"/>
     <rect x="68" y="-4" width="13" height="80" fill="#f4f4f4" filter="url(#blur1)"/>
     <rect x="-4" y="37" width="90" height="15" fill="#b4b4bc" filter="url(#blur3)"/>
     <rect x="30" y="38" width="50" height="9" fill="#dcdce0" filter="url(#blur3)"/>
     <rect x="-4" y="53" width="72" height="18" fill="#2a2e32" filter="url(#blur3)"/>
     <rect x="82" y="0" width="48" height="98" fill="#08080a"/>
     <path d="M96 20h10v14c6 2 10 6 10 12 0 5-4 8-10 9v6h-10v-6c-5-1-9-4-9-9 0-6 4-10 9-12z" fill="#26343a" filter="url(#blur3)"/>
     <ellipse cx="104" cy="38" rx="14" ry="3" fill="#5a6a72" opacity=".7" filter="url(#blur1)"/>
     <g filter="url(#blur1)">
      <circle cx="12" cy="29" r="2.500" fill="#fff"/><circle cx="17.400" cy="28.600" r="2.500" fill="#fff"/><circle cx="22.800" cy="29" r="2.500" fill="#fff"/>
      <circle cx="3.300" cy="34" r="2.600" fill="#f0a848"/>
      <ellipse cx="34" cy="31.500" rx="5.500" ry="2.600" fill="#ee2c26"/><circle cx="44" cy="28" r="2.400" fill="#f05a2a"/>
      <ellipse cx="47.600" cy="34.700" rx="4.200" ry="2.600" fill="#fff"/><ellipse cx="58.300" cy="34.700" rx="4.200" ry="2.600" fill="#fff"/>
      <circle cx="49.600" cy="22.800" r="2.400" fill="#f02a90"/><circle cx="68" cy="31" r="3.200" fill="#f02a90"/><circle cx="75" cy="27" r="2.400" fill="#f03a9a"/><circle cx="72" cy="34" r="2" fill="#f03a9a"/>
      <ellipse cx="63" cy="23" rx="3.500" ry="2.500" fill="#f0b088" transform="rotate(40 63 23)"/>
      <rect x="87" y="4" width="4.500" height="9" rx="2.200" fill="#f7b733"/>
      <circle cx="89" cy="42.600" r="4" fill="#e8707a"/><circle cx="88.400" cy="57.500" r="2.600" fill="#ee3a20"/><circle cx="88.400" cy="64" r="2.600" fill="#f06020"/>
      <ellipse cx="17.400" cy="41.500" rx="1.600" ry="3" fill="#f0a050" opacity=".9"/><circle cx="51" cy="56" r="2" fill="#e88a50" opacity=".8"/>
     </g>
     <path d="M82 45l48 42M84 46l36 52M83 44l47 28" stroke="#b8b8b8" stroke-width=".9" opacity=".75"/>
     <path d="M104 60l22 6" stroke="#888" stroke-width=".8" opacity=".6"/>
</svg>
    <div class="lbl" style="background:rgba(32,32,36,.82)">Cityscapes</div>
   </div>
   <!-- row 3 -->
   <div class="abs tile" style="left:13px;top:214.400px">
    <svg class="abs" width="130" height="98" viewBox="0 0 130 98" preserveAspectRatio="none" style="left:0;top:0;width:129.500px;height:97.500px">
     <defs><linearGradient id="t7b" x1="0" y1="0" x2="1" y2="0"><stop offset="0" stop-color="#8a6a4a"/><stop offset=".2" stop-color="#6f7a62"/><stop offset=".42" stop-color="#62846a"/><stop offset=".6" stop-color="#5fc094"/><stop offset=".88" stop-color="#68c8a0"/><stop offset="1" stop-color="#9ad8c8"/></linearGradient></defs>
     <rect width="130" height="98" fill="url(#t7b)"/>
     <path d="M0 0h40L70 30H20z" fill="#6a8f7a" opacity=".5"/>
     <path d="M0 8l14 14H0z" fill="#c0703a" opacity=".7"/>
    </svg>
   </div>
   <div class="abs tile" style="left:149.300px;top:214.400px;background:#6327f8"></div>
   <div class="abs tile" style="left:285px;top:214.400px">
    <svg class="abs" width="130" height="98" viewBox="0 0 130 98" preserveAspectRatio="none" style="left:0;top:0;width:129.500px;height:97.500px">
     <defs><linearGradient id="t9b" x1="0" y1="0" x2="1" y2="0"><stop offset="0" stop-color="#8ec8f0"/><stop offset=".4" stop-color="#4a94e0"/><stop offset="1" stop-color="#3a78e0"/></linearGradient></defs>
     <rect width="130" height="98" fill="url(#t9b)"/>
     <path d="M0 0h130v4C100 2 80 12 60 8 40 4 20 12 0 10z" fill="#d8ecfa" opacity=".85"/>
     <path d="M0 16c20-6 40 2 60-2s40-8 70-2v6C100 12 80 22 60 20S20 18 0 24z" fill="#2f6fd0" opacity=".8"/>
     <path d="M10 12c10-3 20-3 30 0" stroke="#fff" stroke-width="1.500" fill="none" opacity=".8"/>
    </svg>
   </div>
   <!-- dialog scrollbar -->
   <div class="abs" style="left:420px;top:0;width:10px;height:236px;background:#f1f1f1"></div>
   <div class="abs" style="left:420.500px;top:12px;width:9px;height:159px;background:#c1c1c1"></div>
   <svg class="abs" style="left:422px;top:4px" width="6" height="4" viewBox="0 0 6 4"><path d="M0 4h6L3 0z" fill="#a8a8a8"/></svg>
   <svg class="abs" style="left:422px;top:227px" width="6" height="4" viewBox="0 0 6 4"><path d="M0 0h6L3 4z" fill="#444"/></svg>
  </div>
  <div class="abs" style="left:300.500px;top:294px;width:58px;height:26px;border:1px solid #dadce0;border-radius:4px;color:#3a18e0;font-size:10.500px;letter-spacing:-.3px;line-height:25px;text-align:center">Cancel</div>
  <div class="abs" style="left:368px;top:294px;width:50px;height:26px;background:#f1f3f4;border-radius:4px;color:#9a9a9a;font-size:10.500px;letter-spacing:-.3px;line-height:27px;text-align:center">Done</div>
 </div>
</div>
</body></html>
